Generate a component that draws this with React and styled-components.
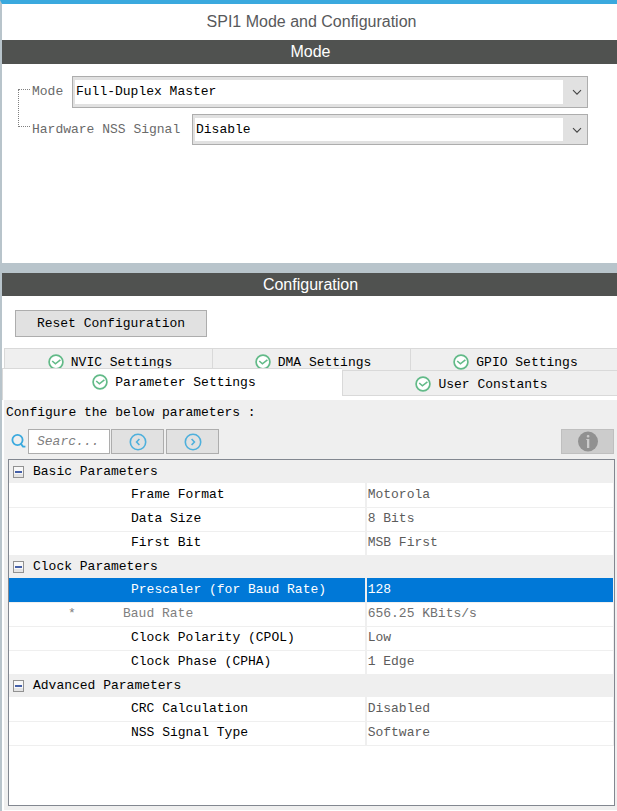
import React, { useState } from "react";
import styled, { createGlobalStyle, css } from "styled-components";

const sans = `"Liberation Sans", Arial, sans-serif`;
const mono = `"Liberation Mono", "Courier New", monospace`;

const GlobalStyle = createGlobalStyle`
  *, *::before, *::after { box-sizing: border-box; }
  body { margin: 0; background: #fff; }
  button, input, select, table { font: inherit; color: inherit; }
`;

const Page = styled.main`
  display: flex;
  flex-direction: column;
  min-height: 100vh;
  border-top: 4px solid #3aa9de;
  border-left: 2px solid #b8c4cb;
  background: #fff;
  color: #000;
  font: 13px/18px ${mono};
`;

const Title = styled.h1`
  margin: 0;
  padding-left: 4px;
  color: #58595b;
  font: 400 16px/36px ${sans};
  text-align: center;
`;

const SectionBar = styled.h2`
  margin: 0;
  padding-left: 2px;
  background: #505250;
  color: #fff;
  font: 400 16px/24px ${sans};
  text-align: center;
`;

const ModePanel = styled.section`
  display: flex;
  padding: 12px 29px 118px 16px;
`;

const TreeLines = styled.div`
  flex: none;
  width: 12px;
  height: 38px;
  margin-top: 13px;
  border: 1px dotted #808080;
  border-right: 0;
`;

const ModeFields = styled.div`
  flex: 1;
  display: grid;
  gap: 6px;
  padding-left: 2px;
`;

const FieldRow = styled.div`
  display: flex;
  align-items: center;
`;

const FieldLabel = styled.label`
  flex: none;
  width: ${(p) => p.$width}px;
  color: #6a6a6a;
`;

const SelectBox = styled.div`
  position: relative;
  flex: 1;
  display: flex;
  svg {
    position: absolute;
    right: 6px;
    top: 13px;
    pointer-events: none;
  }
`;

const Select = styled.select`
  appearance: none;
  width: 100%;
  height: ${(p) => p.$height}px;
  padding: 0 28px 0 3px;
  border: 1px solid #adadad;
  border-radius: 0;
  background: linear-gradient(#fff, #fff) 2px 3px / calc(100% - 26px) calc(100% - 6px) no-repeat #e1e1e1;
  color: #000;
`;

const Divider = styled.div`
  height: 10px;
  background: #b8c4cb;
`;

const ConfigPanel = styled.section`
  flex: 1;
  display: flex;
  flex-direction: column;
`;

const ConfigBar = styled(SectionBar)`
  line-height: 23px;
`;

const ResetButton = styled.button`
  align-self: flex-start;
  width: 192px;
  height: 27px;
  margin: 14px 0 11px 13px;
  padding: 0;
  border: 1px solid #adadad;
  background: #e1e1e1;
`;

const UpperTabs = styled.div`
  display: grid;
  grid-template-columns: 208fr 198fr 207fr;
  margin-left: 2px;
`;

const LowerTabs = styled.div`
  display: grid;
  grid-template-columns: 340fr 275fr;
  align-items: start;
`;

const tabBase = css`
  display: flex;
  justify-content: center;
  gap: 7px;
  padding: 0 0 0 3px;
  border: 0 solid #d9d9d9;
  background: #efefef;
  white-space: nowrap;
  svg { flex: none; }
`;

const UpperTab = styled.button`
  ${tabBase}
  height: 22px;
  padding-top: 5px;
  border-width: 1px 0 0 1px;
  overflow: hidden;
`;

const SelectedTab = styled.button`
  ${tabBase}
  position: relative;
  height: 32px;
  margin-top: -2px;
  padding-top: 5px;
  border-width: 1px 0 0 1px;
  background: #fff;
`;

const LowerTab = styled.button`
  ${tabBase}
  height: 26px;
  padding-top: 5px;
  border-width: 1px 0 1px 1px;
`;

const TabBody = styled.div`
  flex: 1;
  display: flex;
  flex-direction: column;
  margin: 0 0 1px 2px;
  padding: 4px 2px 4px 4px;
  background: #efefef;
`;

const Hint = styled.p`
  margin: 0 0 7px -2px;
`;

const Toolbar = styled.div`
  display: flex;
  align-items: center;
  gap: 2px;
  margin-bottom: 5px;
  padding: 0 1px 0 3px;
`;

const SearchLabel = styled.label`
  display: flex;
`;

const SearchInput = styled.input`
  width: 82px;
  height: 25px;
  margin-right: -1px;
  padding: 0 8px;
  border: 1px solid #adadad;
  border-radius: 0;
  background: #fff;
  font-style: italic;
  &::placeholder { color: #808080; opacity: 1; }
`;

const ToolButton = styled.button`
  display: grid;
  place-items: center;
  width: 53px;
  height: 25px;
  padding: 0;
  border: 1px solid ${(p) => (p.disabled ? "#bfbfbf" : "#adadad")};
  background: ${(p) => (p.disabled ? "#cccccc" : "#e1e1e1")};
  margin-left: ${(p) => (p.$end ? "auto" : "0")};
`;

const TableFrame = styled.div`
  flex: 1;
  min-height: 346px;
  border: 1px solid #828790;
  background: #fff;
`;

const Table = styled.table`
  width: 100%;
  table-layout: fixed;
  border-collapse: collapse;
  border-right: 1px solid #efefef;
`;

const NameColumn = styled.col`
  width: 59%;
`;

const GroupCell = styled.th`
  height: 23px;
  padding: 0 4px;
  background: #efefef;
  font-weight: 400;
  text-align: left;
`;

const GroupToggle = styled.button`
  display: flex;
  align-items: center;
  gap: 9px;
  padding: 0;
  border: 0;
  background: none;
`;

const ParamRow = styled.tr`
  height: 24px;
  background: ${(p) => (p.$selected ? "#0078d7" : "#fff")};
  color: ${(p) => (p.$selected ? "#fff" : p.$locked ? "#808080" : "#000")};
`;

const NameCell = styled.th`
  padding: 0 0 0 ${(p) => (p.$locked ? 59 : 122)}px;
  border-right: 2px solid #efefef;
  border-bottom: 1px solid #efefef;
  font-weight: 400;
  text-align: left;
  white-space: nowrap;
`;

const Marker = styled.span`
  display: inline-block;
  width: 55px;
`;

const ValueCell = styled.td`
  padding: 0 1px;
  border-bottom: 1px solid #efefef;
  color: ${(p) => (p.$selected ? "#fff" : p.$locked ? "#707070" : "#5c5c5c")};
`;

const Chevron = () => (
  <svg width="10" height="7" viewBox="0 0 10 7" fill="none" stroke="#444" strokeWidth="1.1" aria-hidden="true">
    <path d="M1 1.2 5 5.2 9 1.2" />
  </svg>
);

const CheckIcon = () => (
  <svg width="16" height="16" viewBox="0 0 16 16" fill="none" stroke="#62ba88" aria-hidden="true">
    <circle cx="8" cy="8" r="6.9" fill="#fff" strokeWidth="1.7" />
    <path d="M4.2 7 7.4 9.8 12.4 5.8" strokeWidth="1.6" />
  </svg>
);

const SearchIcon = () => (
  <svg width="15" height="15" viewBox="0 0 15 15" fill="none" stroke="#3aa9de" strokeWidth="1.8" aria-hidden="true">
    <circle cx="6.5" cy="6" r="5.1" />
    <path d="M9.6 9.4 12 12.6H14.4" />
  </svg>
);

const ArrowIcon = ({ d }) => (
  <svg width="18" height="18" viewBox="0 0 18 18" fill="none" stroke="#4eb0dc" aria-hidden="true">
    <circle cx="9" cy="9" r="7.7" strokeWidth="1.6" />
    <path d={d} strokeWidth="1.6" />
  </svg>
);

const InfoIcon = () => (
  <svg width="20" height="21" viewBox="0 0 20 21" aria-hidden="true">
    <circle cx="10" cy="10.5" r="10" fill="#919191" />
    <rect x="8.8" y="4" width="2.6" height="2.6" rx="1" fill="#ccc" />
    <path d="M8.3 8h3v9H9V9H8.3z" fill="#ccc" />
  </svg>
);

const CollapseIcon = ({ open }) => (
  <svg width="11" height="12" viewBox="0 0 11 12" fill="none" aria-hidden="true">
    <rect x="0.5" y="0.5" width="10" height="11" fill="#f8f8f8" stroke="#919191" />
    <rect x="1" y="8" width="9" height="3" fill="#e4e4e4" />
    <path d={open ? "M2 6H9" : "M2 6H9M5.5 2.5V9.5"} stroke="#4560a8" strokeWidth="2" />
  </svg>
);

const groups = [
  {
    name: "Basic Parameters",
    params: [
      { name: "Frame Format", value: "Motorola" },
      { name: "Data Size", value: "8 Bits" },
      { name: "First Bit", value: "MSB First" },
    ],
  },
  {
    name: "Clock Parameters",
    params: [
      { name: "Prescaler (for Baud Rate)", value: "128" },
      { name: "Baud Rate", value: "656.25 KBits/s", locked: true },
      { name: "Clock Polarity (CPOL)", value: "Low" },
      { name: "Clock Phase (CPHA)", value: "1 Edge" },
    ],
  },
  {
    name: "Advanced Parameters",
    params: [
      { name: "CRC Calculation", value: "Disabled" },
      { name: "NSS Signal Type", value: "Software" },
    ],
  },
];

function ParameterTable() {
  const [selected, setSelected] = useState("Prescaler (for Baud Rate)");
  const [closed, setClosed] = useState([]);
  const toggle = (name) =>
    setClosed((c) => (c.includes(name) ? c.filter((n) => n !== name) : [...c, name]));

  return (
    <TableFrame>
      <Table aria-label="Parameters">
        <colgroup>
          <NameColumn />
          <col />
        </colgroup>
        {groups.map((group) => {
          const open = !closed.includes(group.name);
          return (
            <tbody key={group.name}>
              <tr>
                <GroupCell colSpan={2} scope="rowgroup">
                  <GroupToggle type="button" aria-expanded={open} onClick={() => toggle(group.name)}>
                    <CollapseIcon open={open} />
                    {group.name}
                  </GroupToggle>
                </GroupCell>
              </tr>
              {open &&
                group.params.map(({ name, value, locked }) => (
                  <ParamRow key={name} $selected={selected === name} $locked={locked} onClick={() => setSelected(name)}>
                    <NameCell scope="row" $locked={locked}>
                      {locked && <Marker>*</Marker>}
                      {name}
                    </NameCell>
                    <ValueCell $selected={selected === name} $locked={locked}>{value}</ValueCell>
                  </ParamRow>
                ))}
            </tbody>
          );
        })}
      </Table>
    </TableFrame>
  );
}

export default function App() {
  return (
    <>
      <GlobalStyle />
      <Page>
        <Title>SPI1 Mode and Configuration</Title>
        <SectionBar>Mode</SectionBar>
        <ModePanel>
          <TreeLines />
          <ModeFields>
            <FieldRow>
              <FieldLabel htmlFor="mode" $width={40}>Mode</FieldLabel>
              <SelectBox>
                <Select id="mode" $height={32} defaultValue="Full-Duplex Master">
                  <option>Disable</option>
                  <option>Full-Duplex Master</option>
                  <option>Full-Duplex Slave</option>
                </Select>
                <Chevron />
              </SelectBox>
            </FieldRow>
            <FieldRow>
              <FieldLabel htmlFor="nss" $width={160}>Hardware NSS Signal</FieldLabel>
              <SelectBox>
                <Select id="nss" $height={31} defaultValue="Disable">
                  <option>Disable</option>
                </Select>
                <Chevron />
              </SelectBox>
            </FieldRow>
          </ModeFields>
        </ModePanel>
        <Divider />
        <ConfigPanel>
          <ConfigBar>Configuration</ConfigBar>
          <ResetButton type="button">Reset Configuration</ResetButton>
          <div role="tablist">
            <UpperTabs role="presentation">
              {["NVIC Settings", "DMA Settings", "GPIO Settings"].map((name) => (
                <UpperTab key={name} type="button" role="tab" aria-selected="false">
                  <CheckIcon />
                  {name}
                </UpperTab>
              ))}
            </UpperTabs>
            <LowerTabs role="presentation">
              <SelectedTab type="button" role="tab" aria-selected="true">
                <CheckIcon />
                Parameter Settings
              </SelectedTab>
              <LowerTab type="button" role="tab" aria-selected="false">
                <CheckIcon />
                User Constants
              </LowerTab>
            </LowerTabs>
          </div>
          <TabBody role="tabpanel">
            <Hint>Configure the below parameters :</Hint>
            <Toolbar>
              <SearchLabel htmlFor="search" aria-label="Search"><SearchIcon /></SearchLabel>
              <SearchInput id="search" type="text" placeholder="Searc..." />
              <ToolButton type="button" aria-label="Previous match"><ArrowIcon d="M10.4 6 7.6 9 10.4 12" /></ToolButton>
              <ToolButton type="button" aria-label="Next match"><ArrowIcon d="M7.6 6 10.4 9 7.6 12" /></ToolButton>
              <ToolButton type="button" aria-label="Information" disabled $end><InfoIcon /></ToolButton>
            </Toolbar>
            <ParameterTable />
          </TabBody>
        </ConfigPanel>
      </Page>
    </>
  );
}
